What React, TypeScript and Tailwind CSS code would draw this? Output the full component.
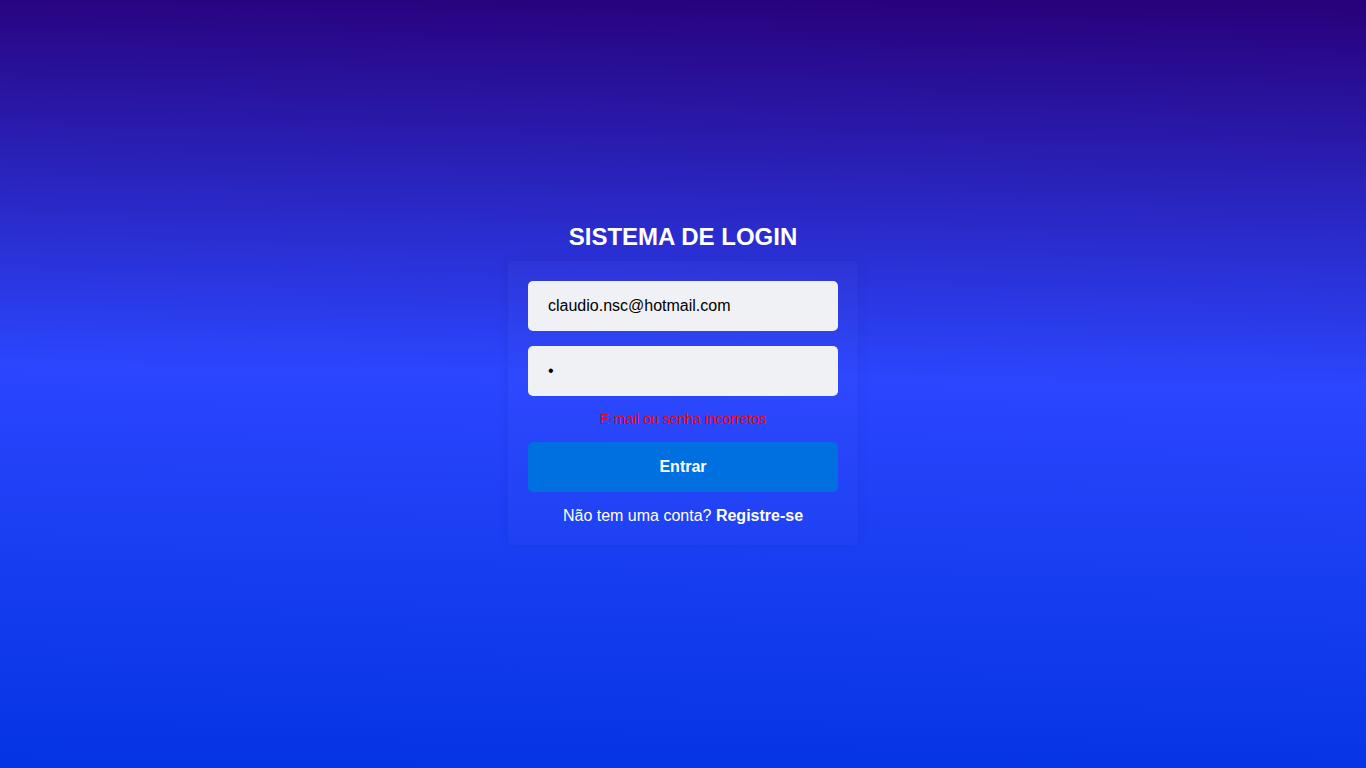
import { useState } from "react";

export default function App() {
  const [email, setEmail] = useState("claudio.nsc@hotmail.com");
  const [password, setPassword] = useState("1");

  return (
    <div
      className="flex min-h-screen w-full flex-col items-center justify-center bg-[linear-gradient(181deg,#28007a_0%,#2b46fe_49%,#0434e3_100%)]"
      style={{ fontFamily: '"Liberation Sans", Arial, sans-serif' }}
    >
      <h1 className="mb-[10px] text-[24px] font-bold leading-[28px] text-white">
        SISTEMA DE LOGIN
      </h1>
      <form
        className="flex w-[350px] flex-col gap-[15px] rounded-[4px] bg-white/[0.015] p-[20px] shadow-[0_0_12px_rgba(0,0,0,0.07)]"
        onSubmit={(e) => e.preventDefault()}
      >
        <input
          type="email"
          value={email}
          onChange={(e) => setEmail(e.target.value)}
          className="h-[50px] w-full rounded-[5px] bg-[#f0f1f5] px-[20px] text-[16px] text-black outline-none"
        />
        <input
          type="password"
          value={password}
          onChange={(e) => setPassword(e.target.value)}
          className="h-[50px] w-full rounded-[5px] bg-[#f0f1f5] px-[20px] text-[16px] text-black outline-none"
        />
        <p className="text-center text-[14px] leading-[16px] text-[#ff0000]">
          E-mail ou senha incorretos
        </p>
        <button
          type="submit"
          className="h-[50px] w-full rounded-[5px] bg-[#006fe0] text-[16px] font-bold text-white"
        >
          Entrar
        </button>
        <p className="text-center text-[16px] leading-[18px] text-white">
          Não tem uma conta? <a className="font-bold">Registre-se</a>
        </p>
      </form>
    </div>
  );
}
